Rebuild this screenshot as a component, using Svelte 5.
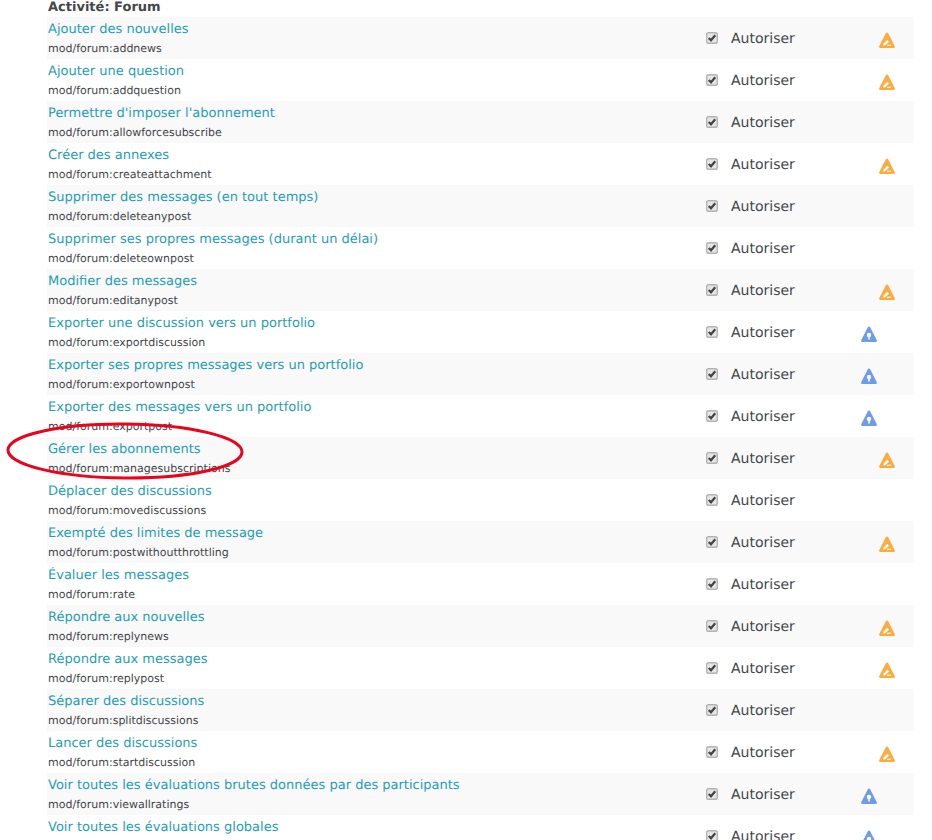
<script>
  // icon: "risk" = orange triangle, "info" = blue triangle, "" = none
  const caps = [
    ["Ajouter des nouvelles", "mod/forum:addnews", "risk"],
    ["Ajouter une question", "mod/forum:addquestion", "risk"],
    ["Permettre d'imposer l'abonnement", "mod/forum:allowforcesubscribe", ""],
    ["Créer des annexes", "mod/forum:createattachment", "risk"],
    ["Supprimer des messages (en tout temps)", "mod/forum:deleteanypost", ""],
    ["Supprimer ses propres messages (durant un délai)", "mod/forum:deleteownpost", ""],
    ["Modifier des messages", "mod/forum:editanypost", "risk"],
    ["Exporter une discussion vers un portfolio", "mod/forum:exportdiscussion", "info"],
    ["Exporter ses propres messages vers un portfolio", "mod/forum:exportownpost", "info"],
    ["Exporter des messages vers un portfolio", "mod/forum:exportpost", "info"],
    ["Gérer les abonnements", "mod/forum:managesubscriptions", "risk"],
    ["Déplacer des discussions", "mod/forum:movediscussions", ""],
    ["Exempté des limites de message", "mod/forum:postwithoutthrottling", "risk"],
    ["Évaluer les messages", "mod/forum:rate", ""],
    ["Répondre aux nouvelles", "mod/forum:replynews", "risk"],
    ["Répondre aux messages", "mod/forum:replypost", "risk"],
    ["Séparer des discussions", "mod/forum:splitdiscussions", ""],
    ["Lancer des discussions", "mod/forum:startdiscussion", "risk"],
    ["Voir toutes les évaluations brutes données par des participants", "mod/forum:viewallratings", "info"],
    ["Voir toutes les évaluations globales", "mod/forum:viewanyratings", "info"]
  ];
</script>

<main class="page">
  <div class="heading">Activité: Forum</div>
  {#each caps as [title, name, icon], i}
    <div class="row" class:odd={i % 2 === 0}>
      <div class="cap">
        <a href="#cap">{title}</a>
        <small>{name}</small>
      </div>
      <label class="perm">
        <svg class="check" width="12" height="12" viewBox="0 0 13 13">
          <rect x="0.75" y="0.75" width="11.5" height="11.5" rx="2" fill="#e6e6e6" stroke="#b4b4b4" stroke-width="1.5" />
          <path d="M3 6.5 L5.4 9 L10 3.6" fill="none" stroke="#444" stroke-width="2.4" />
        </svg>
        <span>Autoriser</span>
      </label>
      <div class="risks">
        {#if icon === "info"}
          <svg class="info" width="16" height="16" viewBox="0 0 16 16">
            <path d="M8 0.5 C8.6 0.5 9 0.9 9.3 1.4 L15.7 14 C16.1 15 15.6 16 14.5 16 L1.5 16 C0.4 16 -0.1 15 0.3 14 L6.7 1.4 C7 0.9 7.4 0.5 8 0.5 Z" fill="#6f9bec" />
            <circle cx="8" cy="9" r="2.2" fill="#fff" />
            <path d="M7.2 10 H8.8 V13.4 H7.2 Z" fill="#fff" />
          </svg>
        {:else if icon === "risk"}
          <svg class="risk" width="16" height="16" viewBox="0 0 16 16">
            <path d="M8 0.5 C8.6 0.5 9 0.9 9.3 1.4 L15.7 14 C16.1 15 15.6 16 14.5 16 L1.5 16 C0.4 16 -0.1 15 0.3 14 L6.7 1.4 C7 0.9 7.4 0.5 8 0.5 Z" fill="#fbac3d" />
            <path d="M4.2 13.6 L4.6 11.4 L8.4 7.8 L10 9.4 L6.2 13.2 Z" fill="#fff" />
            <path d="M8 13.2 H12.2" stroke="#fff" stroke-width="1" />
          </svg>
        {/if}
      </div>
    </div>
  {/each}

  <svg class="circle" width="250" height="66" viewBox="0 0 250 66">
    <ellipse cx="125" cy="33" rx="117" ry="27" fill="none" stroke="#e8041c" stroke-width="3" transform="rotate(0.5 125 33)" />
  </svg>
</main>

<style>
  :global(body) {
    background: #fff;
    overflow: hidden;
  }

  .page {
    position: relative;
    width: 932px;
    height: 840px;
    overflow: hidden;
    box-sizing: border-box;
    padding-left: 47px;
    padding-right: 18px;
    font-family: "DejaVu Sans", Verdana, sans-serif;
    color: #43464a;
    text-rendering: geometricPrecision;
  }

  .heading {
    height: 16px;
    padding-top: 1px;
    padding-left: 1px;
    font-size: 13px;
    font-weight: bold;
    line-height: 13px;
  }

  .row {
    display: flex;
    align-items: flex-start;
    height: 42px;
  }

  .odd {
    background: #f9f9f9;
  }

  .cap {
    flex: 1;
    padding-left: 1px;
    display: flex;
    flex-direction: column;
  }

  .cap a {
    margin-top: 4px;
    font-size: 13px;
    line-height: 17px;
    color: #1f9eb4;
    text-decoration: none;
  }

  .cap small {
    margin-top: 3px;
    font-size: 11px;
    line-height: 15px;
  }

  .perm {
    display: flex;
    align-items: center;
    gap: 13px;
    width: 155px;
    height: 42px;
    font-size: 14px;
  }

  .perm span {
    padding-top: 2px;
  }

  .check {
    flex: none;
  }

  .risks {
    position: relative;
    width: 53px;
    height: 42px;
  }

  .risks svg {
    position: absolute;
    top: 15px;
  }

  .risk {
    left: 18px;
  }

  .info {
    left: 0;
  }

  .circle {
    position: absolute;
    left: 0;
    top: 418px;
  }
</style>
